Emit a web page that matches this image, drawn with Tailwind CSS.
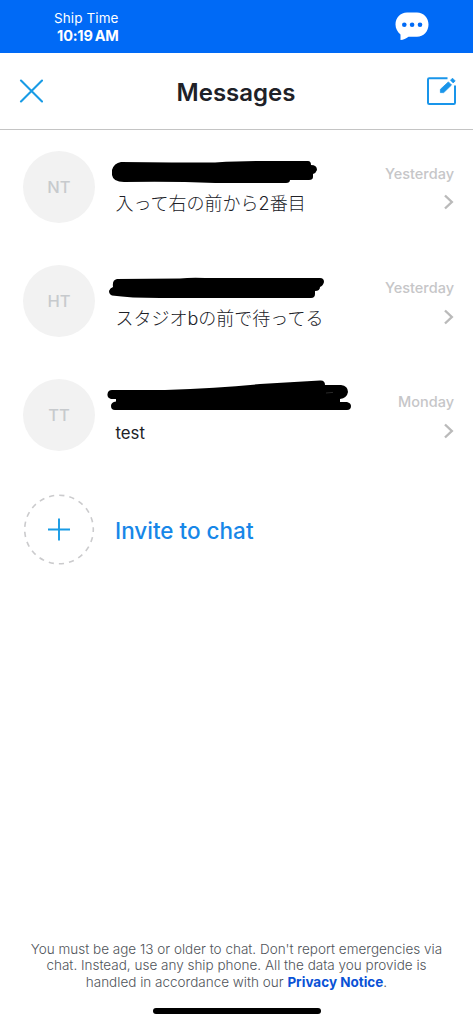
<!DOCTYPE html>
<html lang="en">
<head>
<meta charset="utf-8">
<meta name="viewport" content="width=device-width, initial-scale=1">
<title>Messages</title>
<script src="https://cdn.jsdelivr.net/npm/@tailwindcss/browser@4"></script>
</head>
<body class="bg-white">
<div class="flex h-[1024px] w-[473px] flex-col overflow-hidden bg-white font-['Inter','Noto_Sans_CJK_JP',sans-serif] text-[#202127]">
  <header class="flex h-[53px] shrink-0 items-start justify-between bg-[#006af6] pr-[44px] pl-[54px] text-white">
    <div class="flex flex-col items-end pt-[10px] whitespace-nowrap">
      <span class="text-[13.5px] leading-[17px] tracking-[0.1px]">Ship Time</span>
      <span class="text-[14.5px] leading-[17px] font-bold tracking-[-0.2px]">10:19<span class="ml-[2px]">AM</span></span>
    </div>
    <svg class="mt-[12px] h-[29px] w-[34px]" viewBox="0 0 34 29" fill="none">
      <path fill="#fff" d="M12 .5h10c6.500 0 11.500 5 11.500 12s-5 12.300-11.500 12.300H13.500C11 26.700 8.500 27.800 5.500 28V22.500C2.500 20 .5 16.500 .5 12.500 .5 5.500 5.500 .5 12 .5z"/>
      <g fill="#006af6"><circle cx="9.300" cy="12.800" r="2.300"/><circle cx="17.100" cy="12.800" r="2.300"/><circle cx="25" cy="12.800" r="2.300"/></g>
    </svg>
  </header>

  <div class="flex h-[77px] shrink-0 items-center justify-between border-b border-[#c4c4c4] pr-[16px] pl-[19px]">
    <svg class="h-[24px] w-[24px]" viewBox="0 0 24 24" stroke="#189be5" stroke-width="2.100" stroke-linecap="round"><path d="M2 1.500l21 21M23 1.500l-21 21"/></svg>
    <h1 class="pt-[3px] pl-[2px] text-[24px] leading-[30px] font-semibold">Messages</h1>
    <svg class="h-[30px] w-[30px]" viewBox="0 0 30 30" fill="none">
      <path stroke="#1995ea" stroke-width="2" stroke-linejoin="round" d="M20.500 2.200H2.200Q1 2.200 1 3.400V26.800Q1 28 2.200 28H26.800Q28 28 28 26.800V9.500"/>
      <path fill="#1995ea" stroke="#1995ea" stroke-width=".8" stroke-linejoin="round" d="M13.400 16.600v-3.300l8-7.400 3.100 3.100-7.800 7.600zM23.500 4.200l2-2 2.700 2.700-2 2z"/>
    </svg>
  </div>

  <main class="flex flex-col gap-[42px] pt-[21px] pr-[19px] pl-[23px]">
    <div class="flex h-[72px] gap-[13px]">
      <div class="flex size-[72px] shrink-0 items-center justify-center rounded-full bg-[#f2f2f2] text-[16.500px] font-medium text-[#c7cacd]">NT</div>
      <div class="flex min-w-0 flex-1 flex-col">
        <svg class="h-[40px] w-[250px] shrink-0" viewBox="108 151 250 40"><path d="M121 162Q175 162.500 215 162.500Q238 161 257 161H308Q311 161 311 165Q317 165 317 170Q316 173 313 174V177Q313 180 309 180H290Q290 183 286 183H215Q170 181 124 182Q113 182 112 175V170Q114 163 121 162Z"/></svg>
        <p class="pl-[7.500px] text-[18px] leading-[26px] font-light whitespace-nowrap">入って右の前から2番目</p>
      </div>
      <div class="flex flex-col items-end pt-[13px]">
        <span class="text-[14.500px] leading-[20px] font-medium text-[#c6c6c8]">Yesterday</span>
        <svg class="mt-[10px] h-[16px] w-[10px]" viewBox="0 0 10 16" fill="none" stroke="#bababa" stroke-width="2.400"><path d="M1 1.500l6.800 6.500L1 14.500"/></svg>
      </div>
    </div>

    <div class="flex h-[72px] gap-[13px]">
      <div class="flex size-[72px] shrink-0 items-center justify-center rounded-full bg-[#f2f2f2] text-[16.500px] font-medium text-[#c7cacd]">HT</div>
      <div class="flex min-w-0 flex-1 flex-col">
        <svg class="h-[40px] w-[250px] shrink-0" viewBox="108 265 250 40"><path d="M117 279L180 278.500Q190 277.500 205 278H320Q324 278 324 282Q323 286 320 287Q320 291 315 291V294Q315 298 311 298H160Q130 298 112 295.500Q109 294 109 291Q110 288 113 287Q112 280 117 279Z"/></svg>
        <p class="pl-[7.500px] text-[18px] leading-[27px] font-light whitespace-nowrap">スタジオbの前で待ってる</p>
      </div>
      <div class="flex flex-col items-end pt-[13px]">
        <span class="text-[14.500px] leading-[20px] font-medium text-[#c6c6c8]">Yesterday</span>
        <svg class="mt-[10.500px] h-[16px] w-[10px]" viewBox="0 0 10 16" fill="none" stroke="#bababa" stroke-width="2.400"><path d="M1 1.500l6.800 6.500L1 14.500"/></svg>
      </div>
    </div>

    <div class="flex h-[72px] gap-[13px]">
      <div class="flex size-[72px] shrink-0 items-center justify-center rounded-full bg-[#f2f2f2] text-[16.500px] font-medium text-[#c7cacd]">TT</div>
      <div class="flex min-w-0 flex-1 flex-col">
        <svg class="h-[40px] w-[250px] shrink-0 overflow-visible" viewBox="108 379 250 40"><path d="M112 390H165Q220 388 260 384Q290 382 320 380.500Q325 380 325 385H341Q348 386 348 392Q347 398 340 399V402H347Q351 403 351 406Q351 410 347 410H115Q111 410 111 406Q111 402 116 401.500V399H111Q107 398 107.500 394Q108 390 112 390Z"/><path stroke="#555" stroke-width=".5" d="M326 393l7-.6"/></svg>
        <p class="pl-[7.500px] text-[16.800px] leading-[28px] whitespace-nowrap">test</p>
      </div>
      <div class="flex flex-col items-end pt-[13px]">
        <span class="text-[14.500px] leading-[20px] font-medium text-[#c6c6c8]">Monday</span>
        <svg class="mt-[10.500px] h-[16px] w-[10px]" viewBox="0 0 10 16" fill="none" stroke="#bababa" stroke-width="2.400"><path d="M1 1.500l6.800 6.500L1 14.500"/></svg>
      </div>
    </div>

    <div class="flex h-[72px] items-center gap-[20px]">
      <svg class="size-[72px] shrink-0" viewBox="0 0 72 72" fill="none">
        <circle cx="36" cy="36.500" r="34.300" stroke="#cbcbcd" stroke-width="1.600" stroke-dasharray="5.200 5.063" stroke-dashoffset="2.600"/>
        <path stroke="#189be5" stroke-width="1.900" d="M25 36.500h22M36 25.500v22"/>
      </svg>
      <span class="pt-[3px] text-[22.500px] leading-[28px] font-medium text-[#1787e8]">Invite to chat</span>
    </div>
  </main>

  <footer class="mt-auto flex flex-col items-center pb-[10px]">
    <p class="text-center text-[13.500px] leading-[16.300px] font-light whitespace-nowrap text-[#50545a]">You must be age 13 or older to chat. Don't report emergencies via<br>chat. Instead, use any ship phone. All the data you provide is<br>handled in accordance with our <a class="font-bold text-[#0a52d6]">Privacy Notice</a>.</p>
    <div class="mt-[18px] h-[6px] w-[168px] rounded-full bg-black"></div>
  </footer>
</div>
</body>
</html>
